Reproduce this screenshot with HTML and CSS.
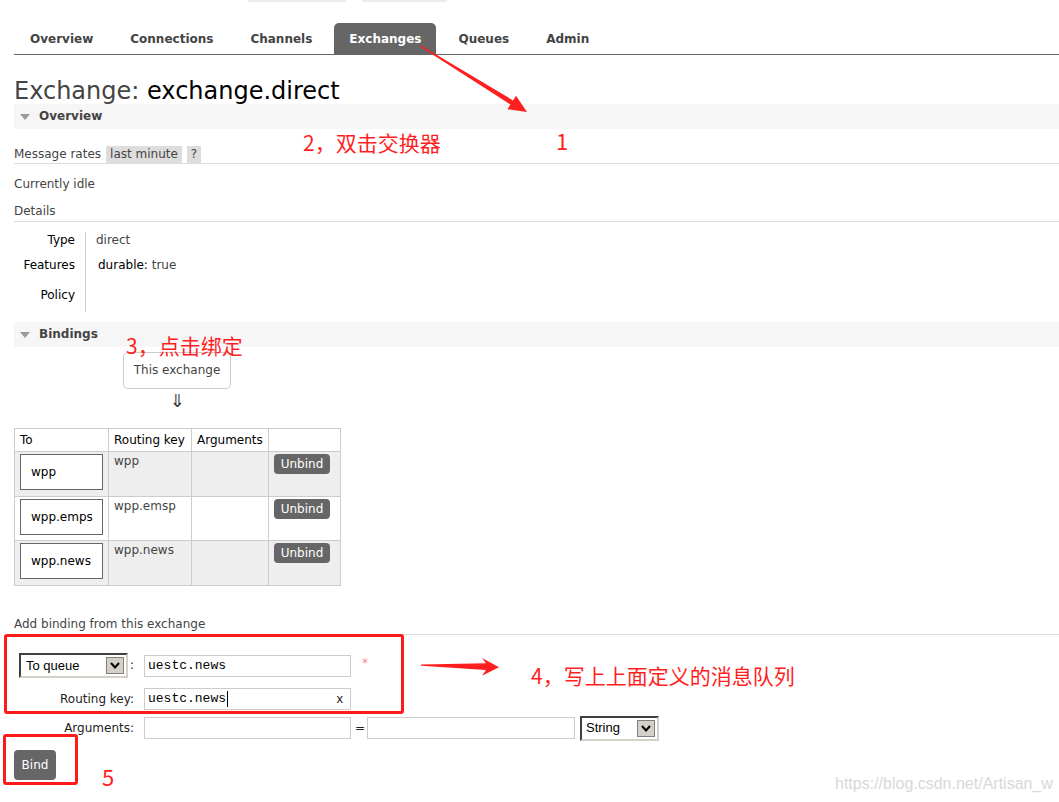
FILE: index.html
```html
<!DOCTYPE html>
<html lang="zh-CN">
<head>
<meta charset="utf-8">
<title>RabbitMQ Management - Exchange</title>
<link rel="stylesheet" href="styles.css">
</head>
<body>
<div class="topbars"><span class="tb tb1"></span><span class="tb tb2"></span></div>
<ul class="tabs">
  <li><a>Overview</a></li>
  <li><a>Connections</a></li>
  <li><a>Channels</a></li>
  <li><a class="sel">Exchanges</a></li>
  <li><a>Queues</a></li>
  <li><a>Admin</a></li>
</ul>

<div class="main">
  <h1><span class="h1-label">Exchange:</span> <b>exchange.direct</b></h1>

  <div class="section">
    <h2 class="band"><span class="tri"></span>Overview</h2>
    <div class="subhead rates"><span class="rates-label">Message rates</span><span class="pill">last minute</span><span class="pill">?</span></div>
    <p class="idle">Currently idle</p>
    <div class="subhead details">Details</div>
    <div class="facts">
      <div class="labels">
        <div class="f1">Type</div>
        <div class="f2">Features</div>
        <div class="f3">Policy</div>
      </div>
      <div class="values">
        <div class="f1">direct</div>
        <div class="f2"><b class="dur">durable:</b> true</div>
        <div class="f3">&nbsp;</div>
      </div>
    </div>
  </div>

  <div class="section">
    <h2 class="band bind-band"><span class="tri"></span>Bindings</h2>
    <div class="source">
      <div class="this-ex">This exchange</div>
      <div class="down">&#8659;</div>
    </div>
    <table class="bindings">
      <colgroup><col class="c1"><col class="c2"><col class="c3"><col class="c4"></colgroup>
      <thead>
        <tr><th>To</th><th>Routing key</th><th>Arguments</th><th></th></tr>
      </thead>
      <tbody>
        <tr class="alt r-a"><td><span class="qbox">wpp</span></td><td class="txt">wpp</td><td></td><td><span class="btn unbind">Unbind</span></td></tr>
        <tr class="r-b"><td><span class="qbox">wpp.emps</span></td><td class="txt">wpp.emsp</td><td></td><td><span class="btn unbind">Unbind</span></td></tr>
        <tr class="alt r-c"><td><span class="qbox">wpp.news</span></td><td class="txt">wpp.news</td><td></td><td><span class="btn unbind">Unbind</span></td></tr>
      </tbody>
    </table>

    <div class="subhead addb">Add binding from this exchange</div>
    <div class="bindform">
      <div class="frow row1">
        <div class="flabel lsel">
          <span class="sel-box w-queue"><span class="sel-text">To queue</span><span class="sel-btn"><svg width="10" height="7" viewBox="0 0 10 7"><polyline points="1,1 5,5.5 9,1" fill="none" stroke="#000" stroke-width="2"/></svg></span></span><span class="colon">:</span>
        </div>
        <span class="inp"><span class="mono">uestc.news</span></span>
        <span class="req">*</span>
      </div>
      <div class="frow row2">
        <div class="flabel">Routing key:</div>
        <span class="inp"><span class="mono">uestc.news</span><span class="caret"></span><span class="clear">x</span></span>
      </div>
      <div class="frow row3">
        <div class="flabel">Arguments:</div>
        <span class="inp"></span><span class="eq">=</span><span class="inp inp2"></span>
        <span class="sel-box w-string"><span class="sel-text">String</span><span class="sel-btn"><svg width="10" height="7" viewBox="0 0 10 7"><polyline points="1,1 5,5.5 9,1" fill="none" stroke="#000" stroke-width="2"/></svg></span></span>
      </div>
      <span class="btn bindbtn">Bind</span>
    </div>
  </div>
</div>

<!-- annotations drawn over the screenshot -->
<svg class="marks" width="1059" height="802" viewBox="0 0 1059 802">
  <polygon points="421,45.5 513,100.4 516,95.7 527,112 507.5,109.3 510.4,104.6 420.5,46.8" fill="#ff1f1f"/>
  <polygon points="421,664.6 486,663.2 482,658 499,667.3 482,675.8 486,670 421,665.8" fill="#ff1f1f"/>
</svg>
<div class="note n2">2，双击交换器</div>
<div class="note n1">1</div>
<div class="note n3">3，点击绑定</div>
<div class="note n4">4，写上上面定义的消息队列</div>
<div class="note n5">5</div>
<div class="redbox rb1"></div>
<div class="redbox rb2"></div>
<div class="watermark">https://blog.csdn.net/Artisan_w</div>
</body>
</html>
```
FILE: styles.css
```css
* { box-sizing: border-box; }
html, body { margin: 0; padding: 0; }
body {
  font: 12px/17px "DejaVu Sans", Verdana, sans-serif;
  color: #444;
  background: #fff;
  position: relative;
  width: 1059px;
  height: 802px;
  overflow: hidden;
}

/* header remnants */
.topbars { display: flex; height: 2px; }
.tb { display: block; height: 2px; background: #ececec; }
.tb1 { margin-left: 248px; width: 98px; }
.tb2 { margin-left: 16px; width: 85px; }

/* tabs */
.tabs {
  list-style: none;
  margin: 21px 0 0 14px;
  padding: 0 0 0 1px;
  display: flex;
  gap: 7px;
  border-bottom: 1px solid #666;
}
.tabs a {
  display: block;
  height: 31px;
  line-height: 32px;
  padding: 0 15px;
  font-weight: bold;
  color: #444;
  border-radius: 5px 5px 0 0;
}
.tabs a.sel { background: #666; color: #fff; }

.main { padding-left: 14px; }

h1 {
  margin: 22px 0 0;
  font-size: 24px;
  line-height: 28px;
  height: 27px;
  font-weight: normal;
  color: #444;
}
h1 b { color: #000; font-weight: normal; }

/* section bands */
.band {
  display: flex;
  align-items: center;
  height: 25px;
  margin: 0;
  background: #f6f6f6;
  font-size: 12px;
  font-weight: bold;
  color: #444;
}
.tri {
  width: 0;
  height: 0;
  border-left: 5px solid transparent;
  border-right: 5px solid transparent;
  border-top: 6px solid #999;
  margin: 0 9px 0 6px;
}
.bind-band { margin-top: 10px; }

.subhead {
  display: flex;
  align-items: flex-end;
  height: 20px;
  line-height: 19px;
  border-bottom: 1px solid #ddd;
}
.rates { margin-top: 15px; }
.rates-label { line-height: 18px; }
.pill {
  background: #ddd;
  line-height: 17px;
  height: 17px;
  padding: 0 4px;
  margin-left: 5px;
}
.idle { margin: 12px 0 0; line-height: 17px; }
.details { margin-top: 9px; }

/* details list */
.facts { display: flex; margin-top: 10px; }
.labels {
  width: 72px;
  padding-right: 10px;
  text-align: right;
  border-right: 1px solid #ccc;
  color: #000;
  padding-bottom: 8px;
}
.values { padding-left: 10px; }
.labels div, .values div { line-height: 17px; height: 17px; }
.labels .f2, .values .f2 { margin-top: 8px; }
.labels .f3, .values .f3 { margin-top: 13px; }
.dur { color: #000; font-weight: normal; margin-left: 2px; }

/* bindings source */
.source { width: 108px; margin: 5px 0 0 109px; text-align: center; }
.this-ex {
  height: 37px;
  line-height: 35px;
  border: 1px solid #ccc;
  border-radius: 5px;
}
.down { font-size: 18px; line-height: 20px; height: 20px; margin-top: 2px; color: #333; }

/* bindings table */
.bindings {
  margin-top: 17px;
  border-collapse: collapse;
  table-layout: fixed;
  width: 326px;
  border: 1px solid #ccc;
}
.c1 { width: 94px; }
.c2 { width: 83px; }
.c3 { width: 77px; }
.c4 { width: 72px; }
.bindings th, .bindings td { border: 1px solid #ccc; padding: 0 5px; }
.bindings th {
  height: 23px;
  text-align: left;
  font-weight: normal;
  color: #000;
}
.bindings td { vertical-align: top; padding-top: 1px; }
.bindings tr.alt td { background: #eee; }
.r-a td { height: 45px; }
.r-b td { height: 44px; }
.r-c td { height: 45px; }
.qbox {
  display: block;
  width: 83px;
  height: 36px;
  line-height: 34px;
  margin-top: 1px;
  border: 1px solid #666;
  background: #fff;
  padding-left: 10px;
  color: #000;
}
.txt { line-height: 17px; }
.btn {
  display: inline-block;
  background: #666;
  color: #fff;
  text-align: center;
}
.unbind {
  width: 56px;
  height: 20px;
  line-height: 20px;
  border-radius: 4px;
  margin-top: 1px;
}

/* add binding */
.addb { margin-top: 29px; }
.bindform { margin-top: 17px; }
.frow { display: flex; align-items: center; }
.row1 { height: 27px; }
.row2 { height: 22px; margin-top: 9px; }
.row3 { height: 26px; margin-top: 5px; }
.flabel {
  width: 120px;
  margin-right: 10px;
  text-align: right;
  color: #222;
}
.lsel { display: flex; align-items: center; text-align: left; padding-left: 5px; }
.colon { margin-left: 2px; color: #222; }
.inp {
  display: flex;
  align-items: center;
  width: 207px;
  height: 22px;
  border: 1px solid #ccc;
  background: #fff;
  padding-left: 3px;
}
.mono { font: 13px/20px "Liberation Mono", "Courier New", monospace; color: #000; }
.caret { display: inline-block; width: 1px; height: 16px; background: #000; margin-left: 1px; }
.clear { margin-left: auto; padding-right: 7px; font: 13px/20px "Liberation Sans", Arial, sans-serif; color: #222; }
.req { margin-left: 11px; color: #f88; margin-top: -4px; }
.eq { margin: 0 2px 0 4px; width: 10px; color: #222; }
.inp2 { width: 208px; }

.sel-box {
  display: flex;
  align-items: center;
  height: 25px;
  border-style: solid;
  border-width: 2px;
  border-color: #404040 #d4d0c8 #d4d0c8 #404040;
  background: #fff;
  font: 13px/18px "Liberation Sans", Arial, sans-serif;
  color: #000;
  padding-left: 5px;
}
.w-queue { width: 109px; }
.w-string { width: 79px; margin-left: 5px; padding-left: 4px; }
.sel-btn {
  margin-left: auto;
  margin-right: 2px;
  width: 18px;
  height: 17px;
  background: #d4d0c8;
  border: 1px solid #808080;
  display: flex;
  align-items: center;
  justify-content: center;
}
.bindbtn {
  margin-top: 9px;
  width: 42px;
  height: 30px;
  line-height: 30px;
  border-radius: 4px;
}

/* annotations */
.marks { position: absolute; left: 0; top: 0; pointer-events: none; }
.note {
  position: absolute;
  font: 21px/21px "Noto Sans CJK SC", "Noto Sans", sans-serif;
  color: #ff1f1f;
  white-space: nowrap;
}
.n2 { left: 303px; top: 132px; }
.n1 { left: 556px; top: 130px; font-size: 22px; }
.n3 { left: 126px; top: 335px; }
.n4 { left: 531px; top: 665px; }
.n5 { left: 102px; top: 766px; font-size: 22px; }
.redbox {
  position: absolute;
  border: 3px solid #ff1a1a;
  border-radius: 3px;
}
.rb1 { left: 4px; top: 634px; width: 400px; height: 80px; }
.rb2 { left: 3px; top: 734px; width: 75px; height: 51px; }
.watermark {
  position: absolute;
  left: 835px;
  top: 775px;
  font: 16px/18px "Liberation Sans", Arial, sans-serif;
  color: #d8d8d8;
  white-space: nowrap;
}
```
